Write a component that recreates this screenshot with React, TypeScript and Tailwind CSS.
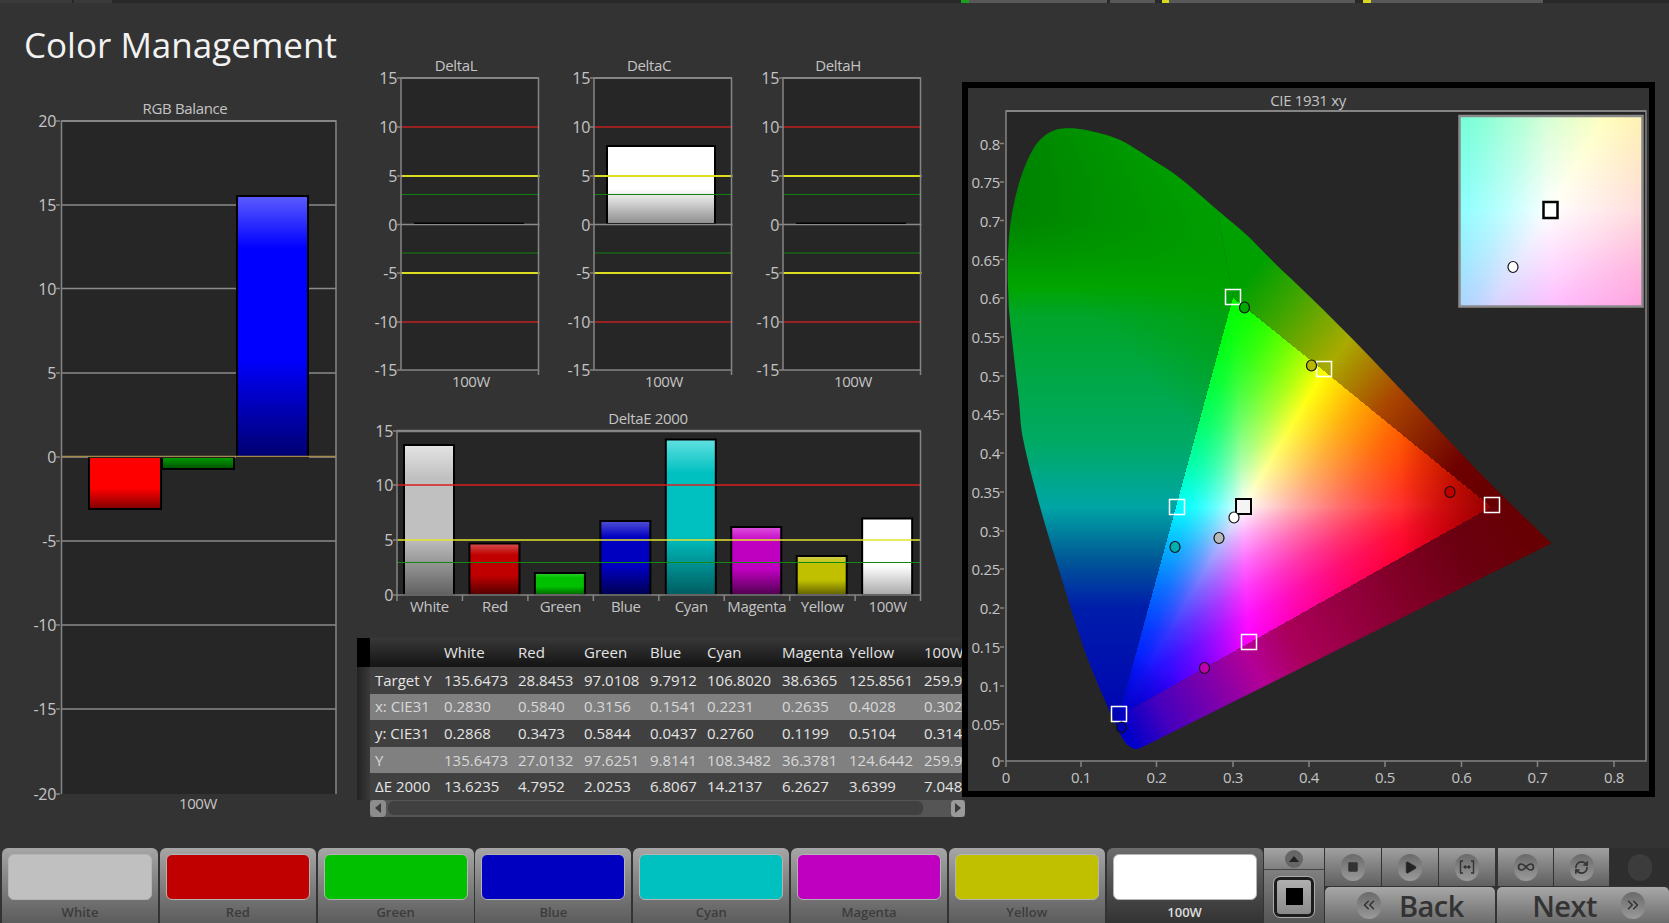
import { ChevronsLeft, ChevronsRight, Infinity as InfinityIcon, Play, RefreshCw, Square } from "lucide-react";
import type { ReactNode } from "react";

type Pt = [number, number];
type Mask = [number, number, number];

const LABEL = "#c4c4c4";
const AXIS = "#858585";

const W: Pt = [1243, 507];
const R: Pt = [1491, 507];
const G: Pt = [1233, 298];
const B: Pt = [1119, 716];
const Y: Pt = [1324, 371];
const C: Pt = [1176, 507];
const M: Pt = [1249, 643];

// spectral locus, traced from the red tip round the top to the blue end
const locus: Pt[] = [
  [1551.7, 543.3], [1490, 483.3], [1423.3, 413.3], [1356.7, 343.3], [1313.3, 300], [1273.3, 261.7], [1246.7, 235],
  [1213.3, 206.7], [1180, 178.3], [1150, 158.3], [1120, 140], [1093.3, 131.7], [1070, 128.3], [1053.3, 130.7],
  [1040, 140], [1030, 155], [1020, 180], [1013.3, 206.7], [1009.3, 233.3], [1007.7, 266.7], [1008.3, 293.3], [1010, 320],
  [1018.5, 396], [1023.3, 440], [1040, 506.7], [1060, 573.3], [1083.3, 646.7], [1103.3, 696.7], [1121.7, 736.7],
  [1130, 746.7], [1136.7, 749], [1146.7, 745],
];

function splinePath(list: Pt[]) {
  let d = `M${list[0][0]} ${list[0][1]}`;
  for (let i = 0; i < list.length - 1; i++) {
    const p0 = list[Math.max(i - 1, 0)];
    const p1 = list[i];
    const p2 = list[i + 1];
    const p3 = list[Math.min(i + 2, list.length - 1)];
    const c1 = [p1[0] + (p2[0] - p0[0]) / 6, p1[1] + (p2[1] - p0[1]) / 6];
    const c2 = [p2[0] - (p3[0] - p1[0]) / 6, p2[1] - (p3[1] - p1[1]) / 6];
    d += `C${c1[0]} ${c1[1]} ${c2[0]} ${c2[1]} ${p2[0]} ${p2[1]}`;
  }
  return d + "Z";
}

const RED: Mask = [1, 0, 0];
const GREEN: Mask = [0, 1, 0];
const BLUE: Mask = [0, 0, 1];

const sectors: { id: string; p: Pt; s: Pt; pc: string; sc: Mask; tc: Mask }[] = [
  { id: "ry", p: R, s: Y, pc: "#ff0000", sc: GREEN, tc: BLUE },
  { id: "gy", p: G, s: Y, pc: "#00ff00", sc: RED, tc: BLUE },
  { id: "gc", p: G, s: C, pc: "#00ff00", sc: BLUE, tc: RED },
  { id: "bc", p: B, s: C, pc: "#0000ff", sc: GREEN, tc: RED },
  { id: "bm", p: B, s: M, pc: "#0000ff", sc: RED, tc: GREEN },
  { id: "rm", p: R, s: M, pc: "#ff0000", sc: BLUE, tc: GREEN },
];

// closest point on the line a-b, used to aim the sector gradients
function foot(c: Pt, a: Pt, b: Pt): Pt {
  const dx = b[0] - a[0];
  const dy = b[1] - a[1];
  const t = ((c[0] - a[0]) * dx + (c[1] - a[1]) * dy) / (dx * dx + dy * dy);
  return [a[0] + t * dx, a[1] + t * dy];
}

const pts = (list: Pt[]) => list.map((p) => p.join(",")).join(" ");

function Grad({ id, from, to, stops }: { id: string; from: Pt; to: Pt; stops: [number, string][] }) {
  return (
    <linearGradient id={id} gradientUnits="userSpaceOnUse" x1={from[0]} y1={from[1]} x2={to[0]} y2={to[1]}>
      {stops.map(([o, c]) => (
        <stop key={o} offset={o} stopColor={c} />
      ))}
    </linearGradient>
  );
}

// one colour channel ramping up with a curve, so the white core stays tight
function ramp(m: Mask): [number, string][] {
  return [0, 0.2, 0.4, 0.6, 0.8, 1].map((o) => {
    const v = Math.round(255 * Math.pow(o, 1.7));
    return [o, `rgb(${m[0] * v},${m[1] * v},${m[2] * v})`];
  });
}

function Triangle() {
  return (
    <g shapeRendering="crispEdges">
      {sectors.map((s) => (
        <g key={s.id} className="isolate">
          <polygon points={pts([W, s.p, s.s])} fill={s.pc} />
          <polygon points={pts([W, s.p, s.s])} fill={`url(#${s.id}-s)`} className="mix-blend-screen" />
          <polygon points={pts([W, s.p, s.s])} fill={`url(#${s.id}-t)`} className="mix-blend-screen" />
        </g>
      ))}
    </g>
  );
}

function Marker({ at, color }: { at: Pt; color: string }) {
  return <ellipse cx={at[0]} cy={at[1]} rx={5} ry={5.5} fill={color} stroke="#111" strokeWidth={1.2} />;
}

function Target({ at, dark }: { at: Pt; dark?: boolean }) {
  return (
    <rect
      x={at[0] - 7.5}
      y={at[1] - 7.5}
      width={15}
      height={15}
      fill={dark ? "#f4f4f4" : "none"}
      stroke={dark ? "#000" : "#fff"}
      strokeWidth={dark ? 2 : 1.5}
    />
  );
}

function YTicks({ x, rows, size = 15 }: { x: number; rows: [number, string][]; size?: number }) {
  return (
    <>
      {rows.map(([y, label]) => (
        <g key={label}>
          <line x1={x - 4} x2={x} y1={y} y2={y} stroke={AXIS} strokeWidth={1.5} />
          <text x={x - 4} y={y + 6} textAnchor="end" fontSize={size} letterSpacing={-0.3} fill={LABEL}>
            {label}
          </text>
        </g>
      ))}
    </>
  );
}

function Bar({ id, c, top, bottom }: { id: string; c: string; top: string; bottom: string }) {
  return (
    <linearGradient id={id} x1="0" y1="0" x2="0" y2="1">
      <stop offset="0" stopColor={top} />
      <stop offset="0.22" stopColor={c} />
      <stop offset="0.62" stopColor={c} />
      <stop offset="1" stopColor={bottom} />
    </linearGradient>
  );
}

function Title({ x, y, children }: { x: number; y: number; children: ReactNode }) {
  return (
    <text x={x} y={y} textAnchor="middle" fontSize={15} letterSpacing={-0.35} fill={LABEL}>
      {children}
    </text>
  );
}

function CieChart() {
  const yTicks: [number, string][] = [
    [143.5, "0.8"], [182, "0.75"], [220.5, "0.7"], [259.5, "0.65"], [298, "0.6"], [337, "0.55"], [376, "0.5"], [414, "0.45"],
    [453, "0.4"], [492, "0.35"], [531, "0.3"], [569, "0.25"], [608, "0.2"], [647, "0.15"], [686, "0.1"], [724, "0.05"], [761, "0"],
  ];
  const xTicks: [number, string][] = [
    [1006, "0"], [1081, "0.1"], [1156.5, "0.2"], [1233, "0.3"], [1309, "0.4"], [1385, "0.5"], [1461.5, "0.6"], [1537.5, "0.7"], [1614, "0.8"],
  ];
  const leftWedge: Pt[] = [G, [1190, 60], [975, 60], [975, 790], [1090, 765], B];
  return (
    <svg width={681} height={703} viewBox="968 88 681 703" className="block">
      <defs>
        {sectors.map((s) => (
          <g key={s.id}>
            <Grad id={`${s.id}-s`} from={s.p} to={foot(s.p, W, s.s)} stops={ramp(s.sc)} />
            <Grad id={`${s.id}-t`} from={foot(W, s.p, s.s)} to={W} stops={ramp(s.tc)} />
          </g>
        ))}
        <linearGradient id="outer-a" gradientUnits="userSpaceOnUse" x1="0" y1="125" x2="0" y2="735">
          <stop offset="0" stopColor="#007300" />
          <stop offset="0.156" stopColor="#008400" />
          <stop offset="0.266" stopColor="#00a500" />
          <stop offset="0.31" stopColor="#00a528" />
          <stop offset="0.52" stopColor="#00aa64" />
          <stop offset="0.626" stopColor="#00a5a5" />
          <stop offset="0.71" stopColor="#005a96" />
          <stop offset="0.79" stopColor="#001eaa" />
          <stop offset="1" stopColor="#0000b4" />
        </linearGradient>
        <linearGradient id="outer-a2" gradientUnits="userSpaceOnUse" x1={1080} y1={300} x2={1220} y2={180}>
          <stop offset="0" stopColor="#00a000" stopOpacity={0} />
          <stop offset="0.8" stopColor="#00a000" stopOpacity={0.9} />
          <stop offset="1" stopColor="#00a000" stopOpacity={1} />
        </linearGradient>
        <Grad
          id="outer-b"
          from={G}
          to={R}
          stops={[[0, "#00a000"], [0.137, "#3ca500"], [0.352, "#aaaa00"], [0.56, "#aa4600"], [0.845, "#6e0000"], [1, "#660000"]]}
        />
        <Grad
          id="outer-c"
          from={B}
          to={[1530, 507]}
          stops={[[0, "#0000c8"], [0.088, "#4600be"], [0.211, "#8200aa"], [0.311, "#b40096"], [0.41, "#aa005a"], [0.67, "#820028"], [0.83, "#6a0010"], [1, "#660000"]]}
        />
        <linearGradient id="red-tip" gradientUnits="userSpaceOnUse" x1={R[0]} y1={R[1]} x2={1400} y2={R[1]}>
          <stop offset="0" stopColor="#000" stopOpacity={0.42} />
          <stop offset="1" stopColor="#000" stopOpacity={0} />
        </linearGradient>
        <linearGradient id="blue-tip" gradientUnits="userSpaceOnUse" x1={B[0]} y1={B[1]} x2={1150} y2={660}>
          <stop offset="0" stopColor="#000" stopOpacity={0.25} />
          <stop offset="1" stopColor="#000" stopOpacity={0} />
        </linearGradient>
        <clipPath id="locus">
          <path d={splinePath(locus)} />
        </clipPath>
        <clipPath id="inset">
          <rect x={1460} y={117} width={182} height={189} />
        </clipPath>
      </defs>

      <Title x={1308} y={106}>
        CIE 1931 xy
      </Title>
      <rect x={1006} y={111} width={640} height={650} fill="#262626" />
      <g clipPath="url(#locus)">
        <polygon points={pts(leftWedge)} fill="url(#outer-a)" />
        <polygon points={pts(leftWedge)} fill="url(#outer-a2)" />
        <polygon points={pts([G, [1190, 60], [1700, 60], [1700, W[1]], R])} fill="url(#outer-b)" />
        <polygon points={pts([R, [1700, W[1]], [1700, 800], [1090, 765], B])} fill="url(#outer-c)" />
        <Triangle />
        <polygon points={pts([R, G, B])} fill="url(#red-tip)" />
        <polygon points={pts([R, G, B])} fill="url(#blue-tip)" />
      </g>

      <path d="M1006 761V111H1646V761Z" fill="none" stroke={AXIS} strokeWidth={1.5} />
      <line x1={1006} x2={1646} y1={111} y2={111} stroke={AXIS} strokeWidth={2} />
      <YTicks x={1004} rows={yTicks} />
      {xTicks.map(([x, label]) => (
        <g key={label}>
          <line x1={x} x2={x} y1={761} y2={767} stroke={AXIS} strokeWidth={1.5} />
          <text x={x} y={783} textAnchor="middle" fontSize={15} letterSpacing={-0.3} fill={LABEL}>
            {label}
          </text>
        </g>
      ))}

      <Target at={[1233, 297]} />
      <Target at={[1324, 369]} />
      <Target at={[1177, 507]} />
      <Target at={[1249, 642]} />
      <Target at={[1492, 505]} />
      <Target at={[1119, 714]} />
      <Marker at={[1244.5, 307.5]} color="#00a800" />
      <Marker at={[1311.5, 365.5]} color="#b8b800" />
      <Marker at={[1450, 492]} color="#c00000" />
      <Marker at={[1175, 547]} color="#00b0b0" />
      <Marker at={[1219, 538]} color="#b8b8b8" />
      <Marker at={[1204.5, 668]} color="#c000b0" />
      <Marker at={[1121.5, 727.5]} color="#0000b0" />
      <Target at={[1243.5, 506.5]} dark />
      <Marker at={[1234, 517.5]} color="#ffffff" />

      <g clipPath="url(#inset)">
        <g transform="translate(1550.5 210) scale(3.5) translate(-1243 -507)">
          <Triangle />
        </g>
        <rect x={1460} y={117} width={182} height={189} fill="#fff" opacity={0.2} />
      </g>
      <rect x={1459.5} y={116} width={183} height={190.5} fill="none" stroke="#8a8a8a" strokeWidth={2.5} />
      <rect x={1543.5} y={202} width={14} height={16} fill="#fff" stroke="#000" strokeWidth={2.5} />
      <ellipse cx={1513} cy={267} rx={5} ry={5.5} fill="#fff" stroke="#111" strokeWidth={1.2} />
    </svg>
  );
}

function RgbChart() {
  const rows: [number, string][] = [
    [121, "20"], [205, "15"], [288.5, "10"], [373, "5"], [457, "0"], [541, "-5"], [625, "-10"], [709, "-15"], [794, "-20"],
  ];
  return (
    <svg width={330} height={715} viewBox="20 100 330 715" className="block">
      <defs>
        <linearGradient id="rgb-b" x1="0" y1="0" x2="0" y2="1">
          <stop offset="0" stopColor="#5c5cff" />
          <stop offset="0.2" stopColor="#0000ff" />
          <stop offset="0.62" stopColor="#0000ff" />
          <stop offset="1" stopColor="#000070" />
        </linearGradient>
        <linearGradient id="rgb-r" x1="0" y1="0" x2="0" y2="1">
          <stop offset="0" stopColor="#ff0000" />
          <stop offset="0.6" stopColor="#ff0000" />
          <stop offset="1" stopColor="#800000" />
        </linearGradient>
        <linearGradient id="rgb-g" x1="0" y1="0" x2="0" y2="1">
          <stop offset="0" stopColor="#00a000" />
          <stop offset="1" stopColor="#005000" />
        </linearGradient>
      </defs>
      <Title x={185} y={114}>
        RGB Balance
      </Title>
      <rect x={61.5} y={121} width={274} height={673} fill="#262626" />
      {rows.slice(1, -1).map(([y, label]) => (
        <line key={label} x1={61.5} x2={336} y1={y} y2={y} stroke="#8a8a8a" strokeWidth={1.5} />
      ))}
      <path d="M61.5 794V121H336V794" fill="none" stroke={AXIS} strokeWidth={1.5} />
      <line x1={61.5} x2={336} y1={121} y2={121} stroke={AXIS} strokeWidth={2} />
      <YTicks x={60} rows={rows} size={16} />
      <rect x={237} y={196} width={71} height={261} fill="url(#rgb-b)" stroke="#000" strokeWidth={2} />
      <rect x={89} y={457} width={72} height={52} fill="url(#rgb-r)" stroke="#000" strokeWidth={2} />
      <rect x={162} y={457} width={72} height={12} fill="url(#rgb-g)" stroke="#000" strokeWidth={2} />
      <line x1={61.5} x2={336} y1={456.5} y2={456.5} stroke="#a08a50" strokeWidth={1.5} />
      <Title x={198} y={809}>
        100W
      </Title>
    </svg>
  );
}

function DeltaChart({ title, left, bar, className }: { title: string; left: number; bar?: boolean; className?: string }) {
  const right = left + 137.5;
  const rows: [number, string][] = [
    [78, "15"], [127, "10"], [176, "5"], [224.5, "0"], [273, "-5"], [322, "-10"], [370, "-15"],
  ];
  const line = (y: number, c: string, w = 1.5) => <line x1={left} x2={right + 1} y1={y} y2={y} stroke={c} strokeWidth={w} />;
  return (
    <svg width={189} height={340} viewBox={`${left - 36} 55 189 340`} className={`block shrink-0 ${className ?? ""}`}>
      <Title x={left + 55} y={71}>
        {title}
      </Title>
      <rect x={left} y={78} width={137.5} height={292} fill="#262626" />
      {bar ? <rect x={left + 13} y={146} width={108} height={78} fill="url(#delta-white)" stroke="#000" strokeWidth={2} /> : null}
      {line(224.5, "#8a8a8a")}
      {bar ? null : <rect x={left + 13} y={222.5} width={110} height={1.5} fill="#000" />}
      {line(127, "#c02020")}
      {line(176, "#dcdc20", 2)}
      {line(194.5, "#108010", 1.2)}
      {line(253, "#108010", 1.2)}
      {line(273, "#dcdc20", 2)}
      {line(322, "#c02020")}
      <path d={`M${left} 370V78H${right}V370H${left}`} fill="none" stroke={AXIS} strokeWidth={1.5} />
      <line x1={left} x2={right} y1={78} y2={78} stroke={AXIS} strokeWidth={2} />
      <line x1={right} x2={right} y1={370} y2={375} stroke={AXIS} strokeWidth={1.5} />
      <YTicks x={left} rows={rows} size={16} />
      <Title x={left + 70} y={387}>
        100W
      </Title>
    </svg>
  );
}

const bars = [
  { name: "White", top: 445, c: "#c0c0c0", hi: "#e4e4e4", lo: "#606060" },
  { name: "Red", top: 543.5, c: "#c00000", hi: "#d85050", lo: "#500000" },
  { name: "Green", top: 573, c: "#00c000", hi: "#30d030", lo: "#006000" },
  { name: "Blue", top: 521, c: "#0000c0", hi: "#5050d8", lo: "#000050" },
  { name: "Cyan", top: 439.5, c: "#00c0c0", hi: "#60e0e0", lo: "#005c60" },
  { name: "Magenta", top: 527, c: "#c000c0", hi: "#e050e0", lo: "#500050" },
  { name: "Yellow", top: 556, c: "#c0c000", hi: "#d0d050", lo: "#606000" },
  { name: "100W", top: 518.5, c: "#ffffff", hi: "#ffffff", lo: "#a8a8a8" },
];

function DeltaEChart() {
  return (
    <svg width={575} height={215} viewBox="365 405 575 215" className="block">
      <defs>
        <linearGradient id="delta-white" x1="0" y1="0" x2="0" y2="1">
          <stop offset="0" stopColor="#fff" />
          <stop offset="0.55" stopColor="#fff" />
          <stop offset="1" stopColor="#8c8c8c" />
        </linearGradient>
        {bars.map((b) => (
          <Bar key={b.name} id={`e-${b.name}`} c={b.c} top={b.hi} bottom={b.lo} />
        ))}
      </defs>
      <Title x={648} y={424}>
        DeltaE 2000
      </Title>
      <rect x={397} y={431} width={523.5} height={164} fill="#262626" />
      {bars.map((b, i) => (
        <rect
          key={b.name}
          x={404 + i * 65.45}
          y={b.top}
          width={50}
          height={595 - b.top}
          fill={`url(#e-${b.name})`}
          stroke="#000"
          strokeWidth={2}
        />
      ))}
      <line x1={397} x2={921} y1={485} y2={485} stroke="#d82020" strokeWidth={1.5} />
      <line x1={397} x2={921} y1={540} y2={540} stroke="#e4e430" strokeWidth={1.5} />
      <line x1={397} x2={921} y1={562.5} y2={562.5} stroke="#108a10" strokeWidth={1.2} />
      <path d="M397 595V431H920.5V595Z" fill="none" stroke={AXIS} strokeWidth={1.5} />
      <line x1={397} x2={920.5} y1={431} y2={431} stroke={AXIS} strokeWidth={2.5} />
      <YTicks x={397} rows={[[431, "15"], [485, "10"], [540, "5"], [595, "0"]]} size={16} />
      {bars.map((b, i) => (
        <g key={b.name}>
          <line x1={397 + i * 65.45} x2={397 + i * 65.45} y1={595} y2={601} stroke={AXIS} strokeWidth={1.5} />
          <Title x={429.5 + i * 65.45} y={612}>
            {b.name}
          </Title>
        </g>
      ))}
      <line x1={920.5} x2={920.5} y1={595} y2={601} stroke={AXIS} strokeWidth={1.5} />
    </svg>
  );
}

const tableRows: { cells: string[]; light?: boolean }[] = [
  { cells: ["Target Y", "135.6473", "28.8453", "97.0108", "9.7912", "106.8020", "38.6365", "125.8561", "259.9"] },
  { cells: ["x: CIE31", "0.2830", "0.5840", "0.3156", "0.1541", "0.2231", "0.2635", "0.4028", "0.302"], light: true },
  { cells: ["y: CIE31", "0.2868", "0.3473", "0.5844", "0.0437", "0.2760", "0.1199", "0.5104", "0.314"] },
  { cells: ["Y", "135.6473", "27.0132", "97.6251", "9.8141", "108.3482", "36.3781", "124.6442", "259.9"], light: true },
  { cells: ["ΔE 2000", "13.6235", "4.7952", "2.0253", "6.8067", "14.2137", "6.2627", "3.6399", "7.048"] },
];

const tableCols = "grid grid-cols-[13px_74px_74px_66px_66px_57px_75px_67px_75px_40px]";

function DataTable() {
  return (
    <div className="w-[605px] overflow-hidden text-[15px] leading-none text-[#e4e4e4]">
      <div className={`${tableCols} h-[29px] items-center bg-linear-to-b from-[#383838] to-[#141414]`}>
        <div className="h-full bg-[#000]" />
        {["", "White", "Red", "Green", "Blue", "Cyan", "Magenta", "Yellow", "100W"].map((h) => (
          <div key={h} className="whitespace-nowrap">
            {h}
          </div>
        ))}
      </div>
      {tableRows.map((row) => (
        <div key={row.cells[0]} className={`${tableCols} h-[26.6px] items-center ${row.light ? "bg-[#808080] text-[#d8d8d8]" : "bg-[#404040]"}`}>
          <div className="h-full bg-linear-to-r from-[#222] to-[#3a3a3a]" />
          {row.cells.map((c, i) => (
            <div key={i} className={i === 0 ? "whitespace-nowrap pl-[5px]" : "whitespace-nowrap"}>
              {c}
            </div>
          ))}
        </div>
      ))}
    </div>
  );
}

function ScrollBar() {
  return (
    <div className="ml-[13px] flex h-[17px] w-[595px] items-center bg-[#555]">
      <div className="flex h-full w-[16px] items-center justify-center rounded-sm bg-[#8c8c8c]">
        <div className="h-0 w-0 border-y-[5px] border-r-[6px] border-y-transparent border-r-[#3a3a3a]" />
      </div>
      <div className="ml-[2px] h-[14px] w-[535px] rounded-md bg-[#404040]" />
      <div className="ml-auto flex h-full w-[14px] items-center justify-center rounded-sm bg-[#9a9a9a]">
        <div className="h-0 w-0 border-y-[5px] border-l-[6px] border-y-transparent border-l-[#3a3a3a]" />
      </div>
    </div>
  );
}

const swatches = [
  { name: "White", c: "bg-[#c0c0c0]" },
  { name: "Red", c: "bg-[#c00000]" },
  { name: "Green", c: "bg-[#00c000]" },
  { name: "Blue", c: "bg-[#0000c0]" },
  { name: "Cyan", c: "bg-[#00c0c0]" },
  { name: "Magenta", c: "bg-[#c000c0]" },
  { name: "Yellow", c: "bg-[#c0c000]" },
];

function Swatch({ name, c, active }: { name: string; c: string; active?: boolean }) {
  return (
    <div
      className={`flex h-full w-[156px] shrink-0 flex-col items-center rounded-t-[6px] px-[6px] pt-[6px] ${
        active ? "bg-linear-to-b from-[#6c6c6c] to-[#333]" : "bg-linear-to-b from-[#a6a6a6] to-[#5c5c5c]"
      }`}
    >
      <div className={`h-[46px] w-full rounded-[6px] border border-[#b4b4b4] ${c}`} />
      <div className={`mt-[6px] text-[13px] font-semibold leading-none ${active ? "text-[#dedede]" : "text-[#3c3c3c]"}`}>{name}</div>
    </div>
  );
}

function Round({ children }: { children: ReactNode }) {
  return (
    <div className="flex h-[27px] w-[24px] items-center justify-center rounded-full bg-linear-to-b from-[#6a6a6a] to-[#9a9a9a] text-[#333]">
      {children}
    </div>
  );
}

function ToolBtn({ children, wide }: { children: ReactNode; wide?: boolean }) {
  return (
    <div className={`flex h-full items-center justify-center bg-linear-to-b from-[#a0a0a0] to-[#606060] ${wide ? "w-[56px]" : "w-[55px]"}`}>
      <Round>{children}</Round>
    </div>
  );
}

function Controls() {
  return (
    <div className="flex h-full flex-1 gap-px">
      <div className="flex h-full w-[60px] shrink-0 flex-col rounded-t-[6px] bg-[#7a7a7a]">
        <div className="flex h-[22px] items-center justify-center border-b border-[#444] bg-linear-to-b from-[#a4a4a4] to-[#808080]">
          <div className="flex h-[18px] w-[18px] items-center justify-center rounded-full bg-[#666]">
            <div className="h-0 w-0 border-x-[5px] border-b-[6px] border-x-transparent border-b-[#222]" />
          </div>
        </div>
        <div className="flex flex-1 items-center justify-center bg-linear-to-b from-[#808080] to-[#555]">
          <div className="flex h-[40px] w-[40px] items-center justify-center rounded-[6px] border-[3px] border-[#1c1c1c] bg-linear-to-b from-[#b0b0b0] to-[#8a8a8a] outline-1 outline-[#aaa]">
            <div className="h-[17px] w-[17px] bg-black" />
          </div>
        </div>
      </div>
      <div className="flex h-full flex-1 flex-col gap-px">
        <div className="flex h-[38px] gap-px">
          <ToolBtn wide>
            <Square size={12} fill="#333" strokeWidth={1} />
          </ToolBtn>
          <ToolBtn wide>
            <Play size={15} fill="#222" strokeWidth={1} />
          </ToolBtn>
          <ToolBtn wide>
            <svg width="16" height="14" viewBox="0 0 16 14" fill="none" stroke="#333" strokeWidth="1.4">
              <path d="M4 1H1.5V13H4M12 1H14.5V13H12M5 7H11M6.6 5.4L5 7L6.6 8.6M9.4 5.4L11 7L9.4 8.6" />
            </svg>
          </ToolBtn>
          <div className="w-px" />
          <ToolBtn>
            <InfinityIcon size={18} strokeWidth={2.2} />
          </ToolBtn>
          <ToolBtn>
            <RefreshCw size={15} strokeWidth={2.6} />
          </ToolBtn>
          <div className="flex flex-1 items-center justify-center bg-[#2e2e2e]">
            <div className="h-[27px] w-[24px] rounded-full bg-[#3c3c3c]" />
          </div>
        </div>
        <div className="flex flex-1 gap-[2px]">
          <div className="flex w-[170px] items-center justify-center gap-[18px] rounded-t-[5px] bg-linear-to-b from-[#a8a8a8] to-[#6c6c6c] text-[29px] font-semibold leading-none tracking-[-0.5px] text-[#333]">
            <Round>
              <ChevronsLeft size={18} strokeWidth={2} />
            </Round>
            <span>Back</span>
          </div>
          <div className="flex flex-1 items-center justify-end gap-[24px] rounded-t-[5px] bg-linear-to-b from-[#a8a8a8] to-[#6c6c6c] pr-[24px] text-[29px] font-semibold leading-none tracking-[-0.5px] text-[#333]">
            <span>Next</span>
            <Round>
              <ChevronsRight size={18} strokeWidth={2} />
            </Round>
          </div>
        </div>
      </div>
    </div>
  );
}

function TopStrip() {
  return (
    <div className="flex h-[3px] bg-[#282828]">
      <div className="w-[72px] bg-[#3a3a3a]" />
      <div className="ml-[2px] w-[38px] bg-[#3a3a3a]" />
      <div className="ml-[849px] w-[8px] bg-[#1aa01a]" />
      <div className="w-[138px] bg-[#585858]" />
      <div className="ml-[3px] w-[45px] bg-[#585858]" />
      <div className="ml-[7px] w-[7px] bg-[#d8d820]" />
      <div className="w-[186px] bg-[#585858]" />
      <div className="ml-[8px] w-[8px] bg-[#d8d820]" />
      <div className="w-[172px] bg-[#585858]" />
    </div>
  );
}

export default function App() {
  return (
    <div className="flex h-[923px] w-[1669px] flex-col overflow-hidden bg-[#333] font-['Open_Sans',sans-serif]">
      <TopStrip />
      <div className="flex flex-1">
        <div className="w-[357px] shrink-0">
          <h1 className="h-[97px] pl-[24px] pt-[17px] text-[35px] font-normal leading-[50px] text-[#f2f2f2]">Color Management</h1>
          <div className="ml-[20px]">
            <RgbChart />
          </div>
        </div>
        <div className="w-[605px] shrink-0">
          <div className="ml-[8px] flex h-[402px] pt-[52px]">
            <DeltaChart title="DeltaL" left={401.5} />
            <DeltaChart title="DeltaC" left={594} className="ml-[3.5px]" bar />
            <DeltaChart title="DeltaH" left={783} />
          </div>
          <div className="ml-[8px]">
            <DeltaEChart />
          </div>
          <div className="mt-[18px]">
            <DataTable />
          </div>
          <ScrollBar />
        </div>
        <div className="mt-[79px] h-[715px] w-[693px] shrink-0 border-[6px] border-black">
          <CieChart />
        </div>
      </div>
      <div className="flex h-[75px] gap-[1.8px] pl-[2px]">
        {swatches.map((s) => (
          <Swatch key={s.name} name={s.name} c={s.c} />
        ))}
        <Swatch name="100W" c="bg-white" active />
        <Controls />
      </div>
    </div>
  );
}
